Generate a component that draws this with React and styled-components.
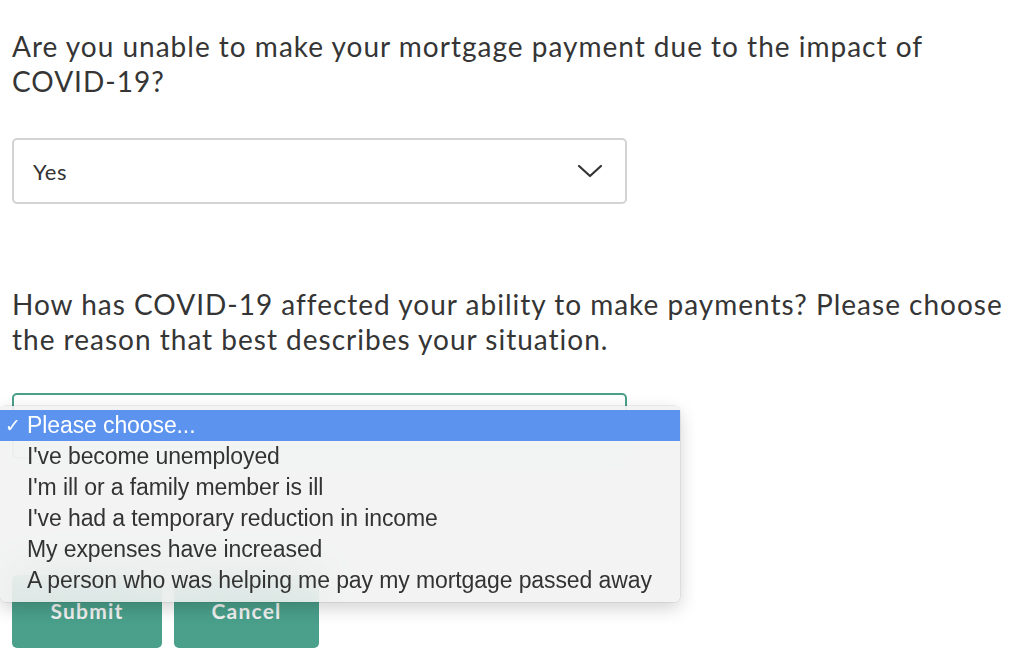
import React from "react";
import styled, { createGlobalStyle } from "styled-components";

const GlobalStyle = createGlobalStyle`
  body {
    margin: 0;
    background: #ffffff;
  }
`;

const Pagina = styled.div`
  padding: 29px 12px 0 12px;
  width: 1000px;
  font-family: "Lato", "Open Sans", sans-serif;
  color: #333333;
`;

const Pergunta = styled.p`
  margin: 0;
  font-size: 28px;
  line-height: 35px;
  letter-spacing: 1px;
  font-weight: 400;
  color: #353535;
  width: 1010px;
`;

const Campo = styled.div`
  position: relative;
  box-sizing: border-box;
  width: 615px;
  height: 66px;
  margin-top: ${(p) => p.$top}px;
  border: 2px solid ${(p) => (p.$ativo ? "#4a9f8a" : "#d3d3d3")};
  border-radius: 5px;
  display: flex;
  align-items: center;
  justify-content: space-between;
  padding: 0 22px 0 19px;
  font-size: 22px;
  letter-spacing: 0.5px;
  color: #333333;
`;

const Seta = styled.svg`
  width: 26px;
  height: 14px;
`;

const Lista = styled.div`
  position: absolute;
  top: 11px;
  left: -14px;
  width: 680px;
  box-sizing: border-box;
  padding: 4px 0 6px 0;
  border-radius: 6px;
  background: rgba(241, 241, 241, 0.86);
  backdrop-filter: blur(24px);
  box-shadow: 0 6px 18px rgba(0, 0, 0, 0.18), 0 0 0 1px rgba(0, 0, 0, 0.06);
  font-family: "Liberation Sans", Arial, sans-serif;
  font-size: 23px;
  letter-spacing: -0.1px;
  z-index: 2;
`;

const Opcao = styled.div`
  height: 31px;
  line-height: 31px;
  padding-left: 27px;
  position: relative;
  color: ${(p) => (p.$marcada ? "#ffffff" : "#333333")};
  background: ${(p) => (p.$marcada ? "#5b93ef" : "transparent")};
  white-space: nowrap;
`;

const Marca = styled.span`
  position: absolute;
  left: 5px;
  top: 0;
  font-size: 19px;
`;

const Botoes = styled.div`
  display: flex;
  gap: 12px;
  margin-top: 116px;
`;

const Botao = styled.button`
  width: ${(p) => p.$largura}px;
  height: 73px;
  border: none;
  border-radius: 5px;
  background: #4aa08b;
  color: #f1f1f1;
  font-family: "Lato", sans-serif;
  font-weight: 700;
  font-size: 21px;
  line-height: 24px;
  letter-spacing: 1.2px;
  display: flex;
  align-items: flex-start;
  justify-content: center;
  padding: 24px 0 0 0;
`;

const opcoes = [
  "Please choose...",
  "I've become unemployed",
  "I'm ill or a family member is ill",
  "I've had a temporary reduction in income",
  "My expenses have increased",
  "A person who was helping me pay my mortgage passed away",
];

export default function App() {
  return (
    <>
      <GlobalStyle />
      <Pagina>
        <Pergunta>
          Are you unable to make your mortgage payment due to the impact of
          <br />
          COVID-19?
        </Pergunta>
        <Campo $top={39}>
          <span>Yes</span>
          <Seta viewBox="0 0 26 14" fill="none">
            <path d="M2 2 L13 12 L24 2" stroke="#333" strokeWidth="2.2" strokeLinecap="round" strokeLinejoin="round" />
          </Seta>
        </Campo>
        <div style={{ height: 83 }} />
        <Pergunta>
          How has COVID-19 affected your ability to make payments? Please choose
          <br />
          the reason that best describes your situation.
        </Pergunta>
        <Campo $top={36} $ativo>
          <Lista>
            {opcoes.map((o, i) => (
              <Opcao key={o} $marcada={i === 0}>
                {i === 0 && <Marca>✓</Marca>}
                {o}
              </Opcao>
            ))}
          </Lista>
        </Campo>
        <Botoes>
          <Botao $largura={150}>Submit</Botao>
          <Botao $largura={145}>Cancel</Botao>
        </Botoes>
      </Pagina>
    </>
  );
}
